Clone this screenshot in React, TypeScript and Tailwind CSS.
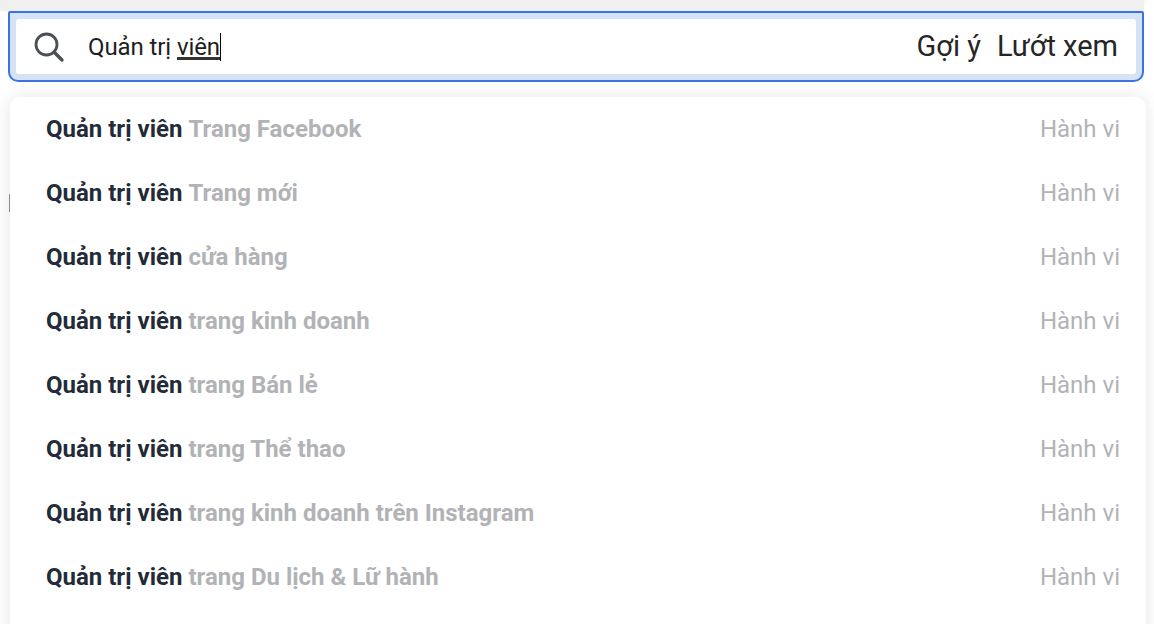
const rows = [
  'Trang Facebook',
  'Trang mới',
  'cửa hàng',
  'trang kinh doanh',
  'trang Bán lẻ',
  'trang Thể thao',
  'trang kinh doanh trên Instagram',
  'trang Du lịch & Lữ hành',
]

export default function App() {
  return (
    <div className="relative h-[624px] w-[1154px] overflow-hidden bg-white font-['Roboto',sans-serif]">
      {/* Grey page strip behind the search box */}
      <div className="h-[11px] w-[1144px] bg-[#f0f0f0]" />

      {/* Search box */}
      <div className="ml-2 h-[71px] w-[1136px] rounded-b-[10px] rounded-t-[2px] border-2 border-[#3b74e0] bg-[#d6e2f6] p-[6px]">
        <div className="flex h-[55px] items-center rounded-[3px] bg-white pl-[17px] pr-[18px]">
          <svg width="32" height="32" viewBox="0 0 32 32" fill="none" className="shrink-0 text-[#4b4f56]">
            <circle cx="13.5" cy="13.5" r="10.5" stroke="currentColor" strokeWidth="2.8" />
            <path d="M21.5 21.5L29 29" stroke="currentColor" strokeWidth="3.4" strokeLinecap="round" />
          </svg>
          <div className="ml-[23px] mt-[1px] flex h-[36px] items-center text-[24px] tracking-[-0.1px] text-[#1c1e21]">
            <span>Quản trị&nbsp;</span>
            <span className="relative">
              viên
              <span className="absolute bottom-[5px] left-0 h-[3px] w-full bg-[#333]" />
            </span>
            <span className="h-[28px] w-[1.5px] bg-black" />
          </div>
          <div className="ml-auto flex gap-4 text-[29px] text-[#262626]">
            <span>Gợi ý</span>
            <span>Lướt xem</span>
          </div>
        </div>
      </div>

      {/* Suggestions dropdown */}
      <div className="ml-[10px] mt-[15px] h-[560px] w-[1136px] rounded-[10px] bg-white shadow-[0_0_18px_rgba(0,0,0,0.1)]">
        {rows.map((row, i) => (
          <div key={i} className="flex h-16 items-center pl-9 pr-[26px] text-[24px]">
            <span className="font-bold text-[#232b38]">Quản trị viên</span>
            <span className="ml-[6px] font-bold text-[#b1b3b6]">{row}</span>
            <span className="ml-auto text-[#b1b3b6]">Hành vi</span>
          </div>
        ))}
      </div>

      {/* Sliver of the page showing beside the dropdown */}
      <div className="absolute left-[9px] top-[194px] h-[18px] w-px bg-[#8a8a8a]" />
    </div>
  )
}
